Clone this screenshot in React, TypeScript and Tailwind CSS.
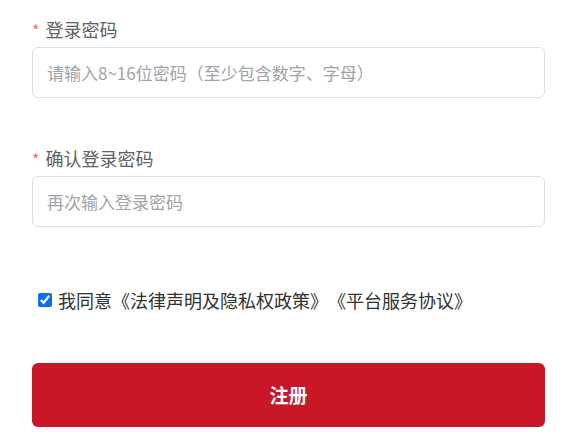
import React, { FC, useState } from "react";

const FONT = `font-["Noto_Sans_CJK_SC","Noto_Sans",sans-serif]`;

interface FieldProps {
  label: string;
  placeholder: string;
  className?: string;
}

const PasswordField: FC<FieldProps> = ({ label, placeholder, className = "" }) => {
  const [value, setValue] = useState("");
  return (
    <div className={`flex flex-col ${className}`}>
      <label className="flex items-center h-[24px] text-[18px] leading-[24px] text-[#606266]">
        <span className="text-[#f56c6c] text-[16px] mr-[6px] mt-[2px]">*</span>
        {label}
      </label>
      <input
        type="password"
        value={value}
        onChange={(e) => setValue(e.target.value)}
        placeholder={placeholder}
        className={`mt-[6px] h-[51px] w-full rounded-[6px] border border-[#dcdfe6] bg-white px-[14px] text-[17px] text-[#303133] placeholder:text-[#a0a3aa] outline-none ${FONT}`}
      />
    </div>
  );
};

export default function App() {
  const [agree, setAgree] = useState(true);

  return (
    <div className={`w-[567px] h-[436px] bg-white overflow-hidden ${FONT}`}>
      <div className="pl-[32px] pr-[22px] pt-[17px]">
        <PasswordField
          label="登录密码"
          placeholder="请输入8~16位密码（至少包含数字、字母）"
        />
        <PasswordField
          className="mt-[48px]"
          label="确认登录密码"
          placeholder="再次输入登录密码"
        />

        <label className="mt-[61px] ml-[6px] flex items-center h-[24px] text-[18px] text-[#303133] cursor-pointer [text-spacing-trim:space-all]">
          <input
            type="checkbox"
            checked={agree}
            onChange={(e) => setAgree(e.target.checked)}
            className="w-[14px] h-[14px] mr-[6px] accent-[#0b6ff2]"
          />
          我同意《法律声明及隐私权政策》《平台服务协议》
        </label>

        <button
          onClick={(e) => e.preventDefault()}
          className="mt-[51px] h-[64px] w-full rounded-[6px] bg-[#c81727] text-white text-[19px] font-bold"
        >
          注册
        </button>
      </div>
    </div>
  );
}
